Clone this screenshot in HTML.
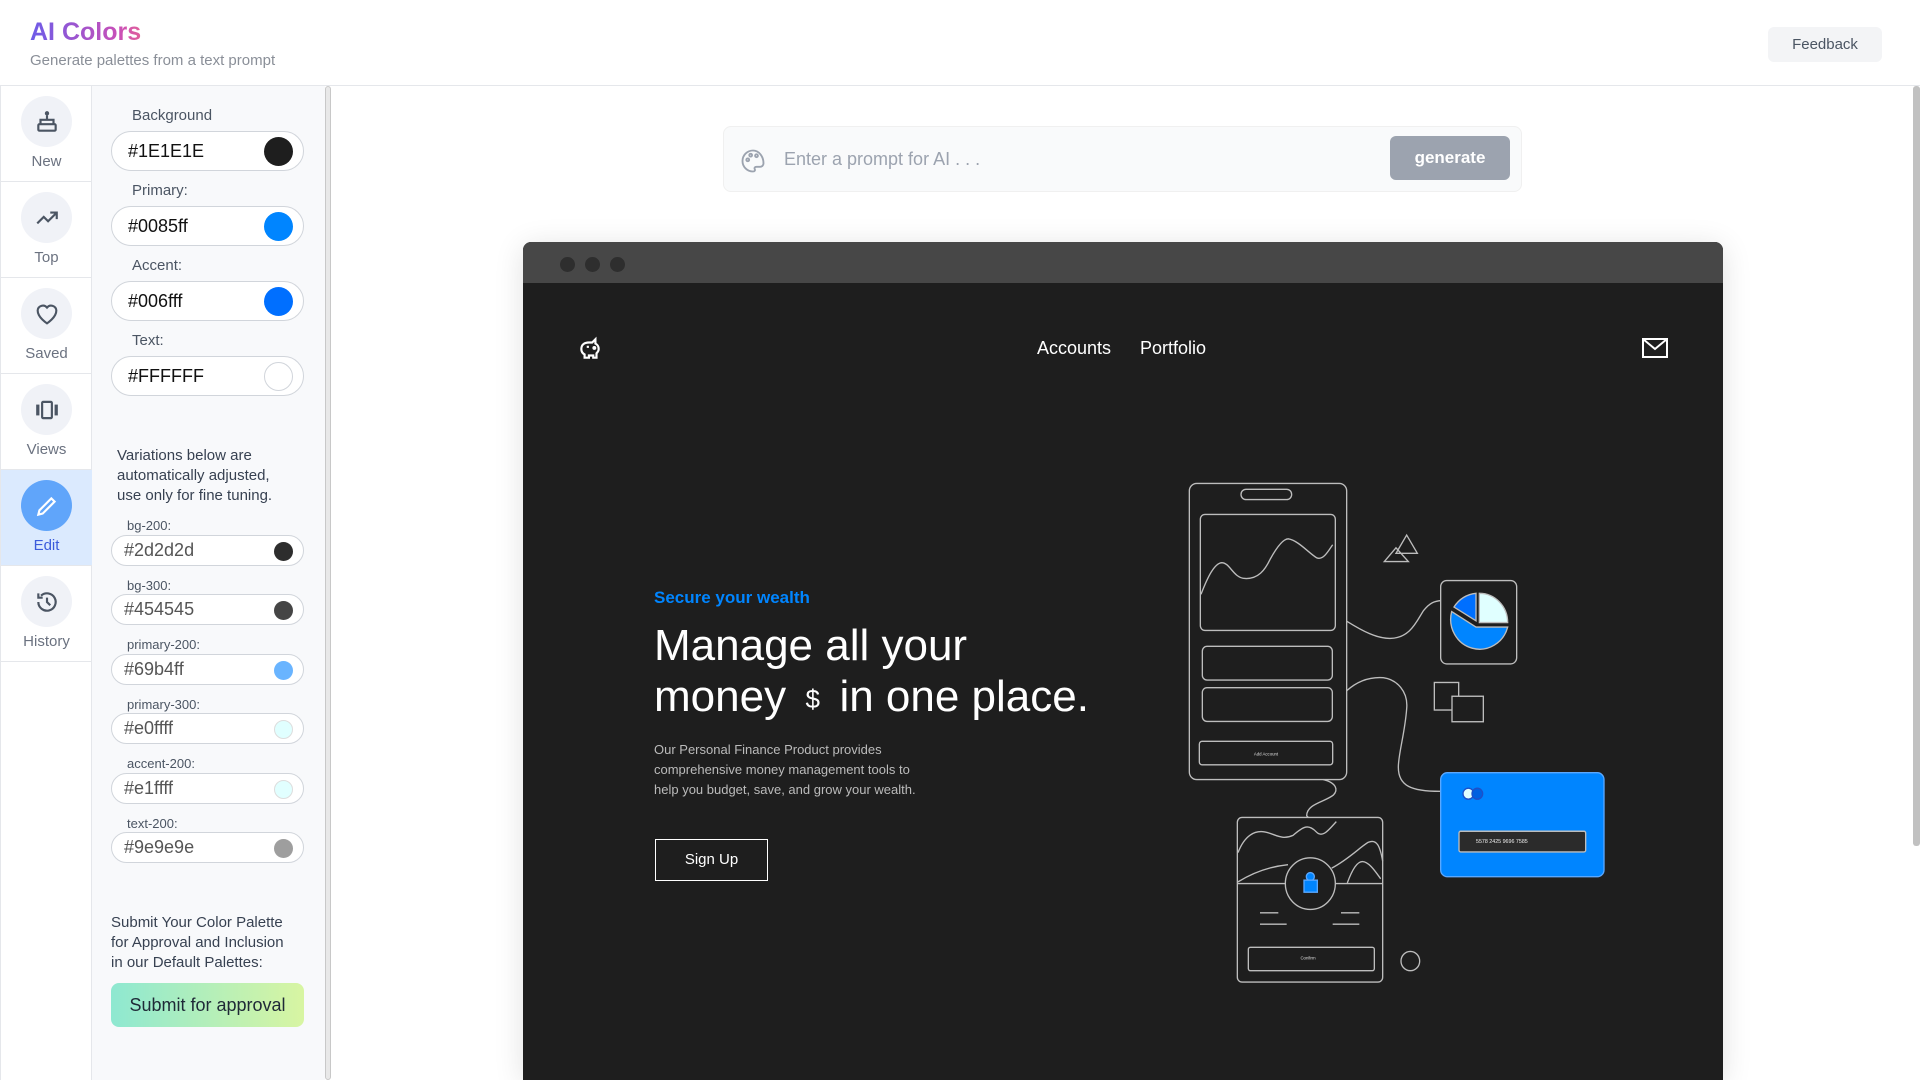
<!DOCTYPE html>
<html><head><meta charset="utf-8"><style>
*{box-sizing:border-box;margin:0;padding:0}
body{width:1920px;height:1080px;overflow:hidden;background:#fff;font-family:"Liberation Sans",sans-serif;position:relative}
.a{position:absolute}
.title{left:30px;top:18px;font-size:25px;font-weight:bold;background:linear-gradient(90deg,#6d5ce8,#c94fb8 80%,#e0609a);-webkit-background-clip:text;color:transparent}
.sub{left:30px;top:52px;font-size:15px;color:#8a8f98}
.fb{left:1768px;top:27px;width:114px;height:35px;background:#f3f4f6;border-radius:6px;font-size:15px;color:#4b5563;text-align:center;line-height:35px}
.hline{left:0;top:85px;width:1920px;height:1px;background:#e5e7eb}
.rail{left:0;top:86px;width:92px;height:994px;border-right:1px solid #e5e7eb;border-left:1px solid #e5e7eb}
.ri{position:absolute;left:0;width:91px;height:96px;border-bottom:1px solid #e5e7eb;text-align:center}
.ri .c{position:absolute;left:20px;top:10px;width:51px;height:51px;border-radius:50%;background:#f0f2f7;display:flex;align-items:center;justify-content:center}
.ri .l{position:absolute;left:0;right:0;top:67px;font-size:15px;color:#6b7280}
.panel{left:92px;top:86px;width:233px;height:994px;background:#f8f9fb}
.sb{left:325px;top:86px;width:6px;height:994px;background:#e8e8e8;border:1px solid #c8c8c8;border-radius:3px}
.lab{font-size:15px;color:#4b5563}
.inp{left:111px;width:193px;background:#fff;border:1px solid #d1d5db;border-radius:22px}
.inp span{position:absolute;left:16px;font-size:18px;color:#111}
.sw{position:absolute;border-radius:50%}
.sm span{left:12px;font-size:18px;color:#555}
.small{font-size:13px;color:#4b5563}
.sub2{left:111px;top:983px;width:193px;height:44px;border-radius:8px;background:linear-gradient(90deg,#8ee8d1,#d8f5a2);font-size:18px;color:#1f2937;text-align:center;line-height:44px}
.prompt{left:723px;top:126px;width:799px;height:66px;background:#f9fafb;border:1px solid #f0f0f0;border-radius:8px}
.gen{left:1390px;top:136px;width:120px;height:44px;background:#9ca3af;border-radius:6px;color:#fff;font-weight:bold;font-size:17px;text-align:center;line-height:44px}
.win{left:523px;top:242px;width:1200px;height:838px;background:#1e1e1e;border-radius:8px 8px 0 0;box-shadow:0 4px 30px rgba(0,0,0,.12);overflow:hidden}
.bar{left:0;top:0;width:1200px;height:41px;background:#474747}
.dot{top:15px;width:15px;height:15px;border-radius:50%;background:#2e2e2e}
.rsb{left:1913px;top:86px;width:7px;height:760px;background:#c1c1c1;border-radius:3px}
</style></head><body>
<div class="a title">AI Colors</div>
<div class="a sub">Generate palettes from a text prompt</div>
<div class="a fb">Feedback</div>
<div class="a hline"></div>

<div class="a rail">
 <div class="ri" style="top:0"><div class="c"><svg width="26" height="26" viewBox="0 0 24 24" fill="none" stroke="#4b5563" stroke-width="2"><rect x="4" y="14" width="16" height="6" rx="1"/><path d="M6 14v-4h12v4M12 10V6"/><circle cx="12" cy="4" r="1" fill="#4b5563"/></svg></div><div class="l">New</div></div>
 <div class="ri" style="top:96px"><div class="c"><svg width="26" height="26" viewBox="0 0 24 24" fill="none" stroke="#4b5563" stroke-width="2"><path d="M3 17l6-6 4 4 8-8M15 7h6v6"/></svg></div><div class="l">Top</div></div>
 <div class="ri" style="top:192px"><div class="c"><svg width="28" height="28" viewBox="0 0 24 24" fill="none" stroke="#4b5563" stroke-width="1.8"><path d="M12 20s-8-5-8-11a4.5 4.5 0 0 1 8-2.5A4.5 4.5 0 0 1 20 9c0 6-8 11-8 11z"/></svg></div><div class="l">Saved</div></div>
 <div class="ri" style="top:288px"><div class="c"><svg width="26" height="26" viewBox="0 0 24 24" fill="#4b5563"><rect x="2" y="7" width="3" height="10"/><rect x="19" y="7" width="3" height="10"/><rect x="7.5" y="4.5" width="9" height="15" rx="1" fill="none" stroke="#4b5563" stroke-width="2"/></svg></div><div class="l">Views</div></div>
 <div class="ri" style="top:384px;background:#dbeafe"><div class="c" style="background:#60a5fa"><svg width="26" height="26" viewBox="0 0 24 24" fill="none" stroke="#fff" stroke-width="2"><path d="M4 20l1-4L16 5l3 3L8 19z"/></svg></div><div class="l" style="color:#3b5bdb">Edit</div></div>
 <div class="ri" style="top:480px"><div class="c"><svg width="26" height="26" viewBox="0 0 24 24" fill="none" stroke="#4b5563" stroke-width="2"><path d="M4 12a8 8 0 1 0 2.5-5.8M4 4v4h4M12 8v4l3 3"/></svg></div><div class="l">History</div></div>
</div>

<div class="a panel"></div>
<div class="a sb"></div>

<div class="a lab" style="left:132px;top:107px">Background</div>
<div class="a inp" style="top:131px;height:40px"><span style="top:9px">#1E1E1E</span><div class="sw" style="left:152px;top:5px;width:29px;height:29px;background:#1e1e1e"></div></div>
<div class="a lab" style="left:132px;top:182px">Primary:</div>
<div class="a inp" style="top:206px;height:40px"><span style="top:9px">#0085ff</span><div class="sw" style="left:152px;top:5px;width:29px;height:29px;background:#0085ff"></div></div>
<div class="a lab" style="left:132px;top:257px">Accent:</div>
<div class="a inp" style="top:281px;height:40px"><span style="top:9px">#006fff</span><div class="sw" style="left:152px;top:5px;width:29px;height:29px;background:#006fff"></div></div>
<div class="a lab" style="left:132px;top:332px">Text:</div>
<div class="a inp" style="top:356px;height:40px"><span style="top:9px">#FFFFFF</span><div class="sw" style="left:152px;top:5px;width:29px;height:29px;background:#fff;border:1px solid #d1d5db"></div></div>

<div class="a lab" style="left:117px;top:446px;line-height:20px;color:#374151">Variations below are<br>automatically adjusted,<br>use only for fine tuning.</div>

<div class="a small" style="left:127px;top:518px">bg-200:</div>
<div class="a inp sm" style="top:535px;height:31px"><span style="top:4px">#2d2d2d</span><div class="sw" style="left:162px;top:6px;width:19px;height:19px;background:#2d2d2d"></div></div>
<div class="a small" style="left:127px;top:578px">bg-300:</div>
<div class="a inp sm" style="top:594px;height:31px"><span style="top:4px">#454545</span><div class="sw" style="left:162px;top:6px;width:19px;height:19px;background:#454545"></div></div>
<div class="a small" style="left:127px;top:637px">primary-200:</div>
<div class="a inp sm" style="top:654px;height:31px"><span style="top:4px">#69b4ff</span><div class="sw" style="left:162px;top:6px;width:19px;height:19px;background:#69b4ff"></div></div>
<div class="a small" style="left:127px;top:697px">primary-300:</div>
<div class="a inp sm" style="top:713px;height:31px"><span style="top:4px">#e0ffff</span><div class="sw" style="left:162px;top:6px;width:19px;height:19px;background:#e0ffff;border:1px solid #ddd"></div></div>
<div class="a small" style="left:127px;top:756px">accent-200:</div>
<div class="a inp sm" style="top:773px;height:31px"><span style="top:4px">#e1ffff</span><div class="sw" style="left:162px;top:6px;width:19px;height:19px;background:#e1ffff;border:1px solid #ddd"></div></div>
<div class="a small" style="left:127px;top:816px">text-200:</div>
<div class="a inp sm" style="top:832px;height:31px"><span style="top:4px">#9e9e9e</span><div class="sw" style="left:162px;top:6px;width:19px;height:19px;background:#9e9e9e"></div></div>

<div class="a lab" style="left:111px;top:913px;line-height:20px;color:#374151">Submit Your Color Palette<br>for Approval and Inclusion<br>in our Default Palettes:</div>
<div class="a sub2">Submit for approval</div>

<div class="a prompt">
 <svg class="a" style="left:15px;top:20px" width="28" height="28" viewBox="0 0 24 24" fill="none" stroke="#9ca3af" stroke-width="1.6"><path d="M12 3a9 9 0 1 0 0 18c1.5 0 2-1 1.5-2s0-2 1.5-2H18a3 3 0 0 0 3-3c0-6-4-11-9-11z"/><circle cx="7.5" cy="11" r="1.2"/><circle cx="10" cy="7" r="1.2"/><circle cx="15" cy="7.5" r="1.2"/></svg>
 <div class="a" style="left:60px;top:22px;font-size:18px;color:#9ca3af">Enter a prompt for AI . . .</div>
</div>
<div class="a gen">generate</div>

<div class="a win">
 <div class="a bar"></div>
 <div class="a dot" style="left:37px"></div><div class="a dot" style="left:62px"></div><div class="a dot" style="left:87px"></div>
 <svg class="a" style="left:54px;top:94px" width="26" height="26" viewBox="0 0 24 24" fill="none" stroke="#fff" stroke-width="2"><path d="M4 12c0-4 3-6 7-6h3l3-3v4c2 1 3 3 3 5 0 2-1 3-2 4v4h-3v-2h-4v2H7v-3c-2-1-3-3-3-5z"/><path d="M9 10h2"/><circle cx="16" cy="11" r=".8" fill="#fff"/></svg>
 <div class="a" style="left:514px;top:96px;font-size:18px;color:#fff">Accounts</div>
 <div class="a" style="left:617px;top:96px;font-size:18px;color:#fff">Portfolio</div>
 <svg class="a" style="left:1118px;top:94px" width="28" height="24" viewBox="0 0 28 24" fill="none" stroke="#fff" stroke-width="2"><rect x="2" y="3" width="24" height="18"/><path d="M2 3l12 10L26 3"/></svg>
 <div class="a" style="left:131px;top:346px;font-size:17px;color:#0085ff;font-weight:bold">Secure your wealth</div>
 <div class="a" style="left:131px;top:378px;font-size:44px;color:#fff;line-height:51px">Manage all your<br>money <span style="font-size:26px;vertical-align:middle">&nbsp;$&nbsp;</span> in one place.</div>
 <div class="a" style="left:131px;top:498px;font-size:13px;color:#bbb;line-height:20px">Our Personal Finance Product provides<br>comprehensive money management tools to<br>help you budget, save, and grow your wealth.</div>
 <div class="a" style="left:132px;top:597px;width:113px;height:42px;border:1.5px solid #fff;color:#fff;font-size:15px;text-align:center;line-height:39px">Sign Up</div>
</div>

<svg class="a" style="left:1150px;top:460px" width="480" height="540" viewBox="0 0 1440 1568" preserveAspectRatio="none" fill="none" stroke="#bdbdbd" stroke-width="4">
 <rect x="118" y="68" width="472" height="860" rx="22"/>
 <rect x="273" y="85" width="152" height="30" rx="15"/>
 <rect x="151" y="158" width="405" height="337" rx="14"/>
 <path d="M153 390c20-50 40-90 62-92 25 0 35 45 70 46 40 2 60-25 75-55 20-35 40-60 55-60 30 5 60 40 85 55 20 8 35-20 48-38"/>
 <rect x="157" y="541" width="390" height="98" rx="14"/>
 <rect x="157" y="661" width="390" height="98" rx="14"/>
 <rect x="148" y="817" width="400" height="68" rx="8"/>
 <text x="348" y="858" fill="#ddd" stroke="none" font-size="13" text-anchor="middle" font-family="Liberation Sans">Add Account</text>
 <path d="M770 218l32 53h-64zM738 255l37 40h-72z"/>
 <rect x="872" y="350" width="228" height="242" rx="18"/>
 <path d="M590 468c50 30 90 50 130 50 60 0 80-50 100-80 20-25 35-28 52-30"/>
 <path d="M978 387a87 87 0 0 0-66 40l66 40z" fill="#006fff"/>
 <path d="M988 387a85 85 0 0 1 85 85h-85z" fill="#e0ffff"/>
 <path d="M905 440a85 85 0 1 0 168 45h-95z" fill="#0085ff"/>
 <path d="M590 670c40-35 80-40 110-38 40 5 75 40 70 90-5 70-25 130-25 170 0 55 40 70 125 70"/>
 <rect x="853" y="646" width="73" height="80"/>
 <rect x="906" y="686" width="94" height="74" fill="#1e1e1e"/>
 <rect x="872" y="908" width="490" height="302" rx="20" fill="#0085ff" stroke="#5aa8ff"/>
 <circle cx="955" cy="969" r="16" fill="#e0ffff" stroke="#1e50c8"/>
 <circle cx="982" cy="969" r="16" fill="#0060e0" stroke="#1e50c8"/>
 <rect x="927" y="1078" width="380" height="60" rx="5" fill="#2b2b2b"/>
 <text x="978" y="1112" fill="#eee" stroke="none" font-size="16" font-family="Liberation Sans">5578 2425 9696 7585</text>
 <path d="M520 928c40 10 45 30 30 45-25 20-80 25-80 60l5 5"/>
 <rect x="262" y="1038" width="436" height="478" rx="14"/>
 <path d="M264 1140c20-50 50-65 80-60 30 5 50 25 85 10 30-25 45-35 70-10 20 20 40-10 60-30M264 1225c50-30 100-45 150-50M545 1185c50-25 90-65 110-75 25-10 35 10 43 55M592 1228c15-40 30-62 45-62 20 0 40 30 55 50M262 1230h436"/>
 <circle cx="481" cy="1230" r="75" fill="#1e1e1e"/>
 <circle cx="481" cy="1210" r="12" fill="#0085ff" stroke="#5aa8ff"/>
 <rect x="462" y="1220" width="40" height="35" fill="#0085ff" stroke="#5aa8ff"/>
 <path d="M330 1315h55M330 1348h80M573 1315h55M548 1348h80"/>
 <rect x="295" y="1415" width="378" height="68" rx="6"/>
 <text x="474" y="1450" fill="#ddd" stroke="none" font-size="13" text-anchor="middle" font-family="Liberation Sans">Confirm</text>
 <circle cx="781" cy="1455" r="28"/>
</svg>

<div class="a rsb"></div>
</body></html>
